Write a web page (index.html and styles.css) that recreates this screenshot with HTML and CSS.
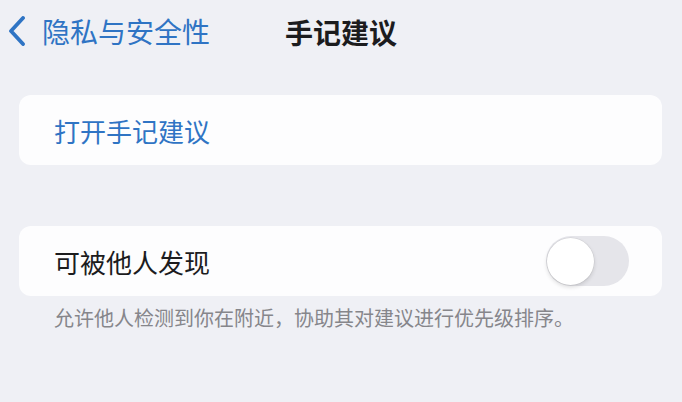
FILE: index.html
```html
<!DOCTYPE html>
<html lang="zh-CN">
<head>
  <meta charset="UTF-8">
  <title>手记建议</title>
  <meta name="viewport" content="width=device-width, initial-scale=1.0">
  <link rel="stylesheet" href="styles.css">
</head>
<body>
  <header class="nav">
    <a class="back" href="#">
      <svg class="chevron" width="18" height="30" viewBox="0 0 18 30">
        <path d="M15 2 L3 15 L15 28" fill="none" stroke="currentColor" stroke-width="3.8" stroke-linecap="round" stroke-linejoin="round"/>
      </svg>
      <span>隐私与安全性</span>
    </a>
    <h1 class="nav-title">手记建议</h1>
  </header>

  <main>
    <section class="group first">
      <div class="row">
        <span class="link">打开手记建议</span>
      </div>
    </section>

    <section class="group">
      <div class="row">
        <span class="label">可被他人发现</span>
        <span class="toggle"><span class="knob"></span></span>
      </div>
      <p class="footnote">允许他人检测到你在附近，协助其对建议进行优先级排序。</p>
    </section>
  </main>
</body>
</html>
```

FILE: styles.css
```css
html, body {
  margin: 0;
  padding: 0;
}
body {
  font-family: "Noto Sans CJK SC", "Noto Sans", sans-serif;
  background: #eff0f5;
  color: #1c1c1e;
  width: 682px;
  height: 402px;
  overflow: hidden;
}
.nav {
  position: relative;
  height: 62px;
  display: flex;
  align-items: center;
  justify-content: center;
}
.back {
  position: absolute;
  left: 8px;
  top: 15px;
  display: flex;
  align-items: center;
  gap: 16px;
  color: #2f74c4;
  text-decoration: none;
  font-size: 28px;
  line-height: 32px;
}
.chevron {
  display: block;
}
.nav-title {
  margin: 0;
  font-size: 28px;
  font-weight: 700;
  line-height: 32px;
  padding-top: 2px;
}
main {
  padding: 0 20px 0 19px;
}
.group.first {
  margin-top: 33px;
  margin-bottom: 61px;
}
.row {
  height: 70px;
  background: #fdfdfe;
  border-radius: 12px;
  display: flex;
  align-items: center;
  justify-content: space-between;
  padding: 0 33px 0 35px;
  font-size: 26px;
}
.link {
  color: #2f74c4;
}
.label {
  color: #1c1c1e;
}
.toggle {
  width: 83px;
  height: 50px;
  border-radius: 25px;
  background: #e5e5ea;
  display: flex;
  align-items: center;
  padding-left: 1px;
  box-sizing: border-box;
}
.knob {
  width: 47px;
  height: 47px;
  border-radius: 50%;
  background: #fff;
  box-shadow: 0 2px 4px rgba(0, 0, 0, 0.14), 0 0 0 0.5px rgba(0, 0, 0, 0.08);
}
.footnote {
  margin: 10px 0 0 35px;
  font-size: 20px;
  line-height: 24px;
  color: #86868b;
}
```
